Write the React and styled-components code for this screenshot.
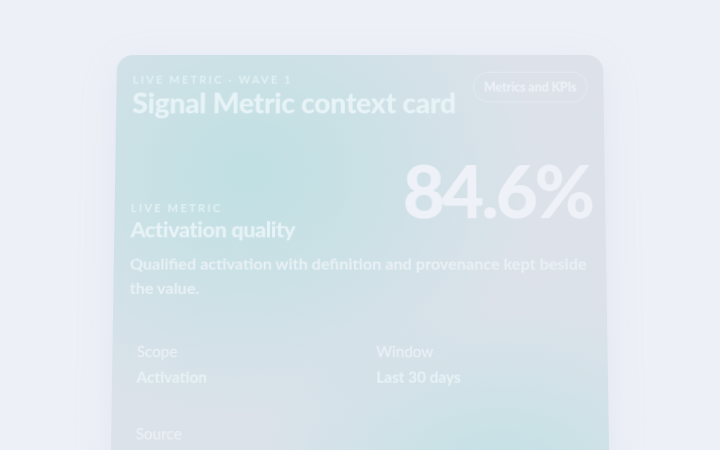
import React from "react";
import styled, { createGlobalStyle } from "styled-components";

const Global = createGlobalStyle`
  html, body { margin: 0; padding: 0; background: #edf0f7; }
  body { font-family: Lato, "Open Sans", sans-serif; overflow: hidden; }
  * { box-sizing: border-box; }
`;

const Page = styled.main`
  min-height: 100vh;
  display: flex;
  justify-content: center;
  padding-top: 55px;
  perspective: 1000px;
`;

const Card = styled.section`
  width: 486px;
  border-radius: 16px;
  padding: 17px 16px 40px;
  transform-origin: 50% 0;
  transform: rotateX(3.6deg);
  background:
    radial-gradient(ellipse 290px 250px at 27% 25%, rgba(192, 224, 227, 1), rgba(192, 224, 227, 0.6) 45%, rgba(192, 224, 227, 0) 100%),
    radial-gradient(ellipse 250px 180px at 78% 90%, rgba(192, 225, 228, 0.95), rgba(192, 225, 228, 0) 100%),
    linear-gradient(180deg, #dde2ea 0%, #dce2ea 100%);
  box-shadow: 0 10px 40px rgba(160, 175, 200, 0.12);
  color: #eef2f8;
`;

const Header = styled.header`
  display: flex;
  justify-content: space-between;
  align-items: flex-start;
  gap: 10px;
`;

const Eyebrow = styled.div`
  font-size: 11px;
  font-weight: 700;
  letter-spacing: 0.2em;
  text-transform: uppercase;
  color: #e0f1f3;
  line-height: 14px;
`;

const HeadText = styled.div`
  padding-top: 1px;
  min-width: 0;
`;

const Title = styled.h1`
  margin: 0;
  font-size: 28.3px;
  font-weight: 900;
  letter-spacing: -0.012em;
  line-height: 32px;
  white-space: nowrap;
  color: #e7f3f6;
`;

const Badge = styled.span`
  flex: none;
  border: 1.5px dotted rgba(240, 244, 250, 0.9);
  border-radius: 999px;
  padding: 7px 10px;
  font-size: 12.5px;
  font-weight: 700;
  letter-spacing: -0.01em;
  color: #eef2f8;
  line-height: 15px;
`;

const MetricRow = styled.div`
  margin-top: 38px;
  display: flex;
  justify-content: space-between;
  align-items: flex-end;
`;

const MetricLabel = styled.div``;

const Subtitle = styled.h2`
  margin: 1px 0 0;
  font-size: 21.5px;
  font-weight: 900;
  letter-spacing: -0.02em;
  line-height: 26px;
  color: #e7f3f6;
`;

const BigValue = styled.div`
  font-size: 72px;
  font-weight: 900;
  letter-spacing: -0.04em;
  line-height: 68px;
  color: #eef1f8;
  margin-right: -3px;
  margin-bottom: 18px;
`;

const Description = styled.p`
  margin: 9px 0 0;
  font-size: 16px;
  line-height: 24px;
  color: #e9f1f5;
  font-weight: 700;
`;

const MetaGrid = styled.dl`
  margin: 29px 0 0;
  display: grid;
  grid-template-columns: 1fr 1fr;
  column-gap: 16px;
`;

const MetaItem = styled.div`
  padding: 10px 8px 0;
  height: 80px;
`;

const MetaLabel = styled.dt`
  font-size: 15px;
  line-height: 22px;
  color: #edf1f7;
`;

const MetaValue = styled.dd`
  margin: 3px 0 0;
  font-size: 15px;
  line-height: 22px;
  font-weight: 700;
  color: #e8f3f6;
`;

const meta = [
  ["Scope", "Activation"],
  ["Window", "Last 30 days"],
  ["Source", "Product analytics"],
];

export default function App() {
  return (
    <>
      <Global />
      <Page>
        <Card>
          <Header>
            <HeadText>
              <Eyebrow>Live metric · Wave 1</Eyebrow>
              <Title>Signal Metric context card</Title>
            </HeadText>
            <Badge>Metrics and KPIs</Badge>
          </Header>
          <MetricRow>
            <MetricLabel>
              <Eyebrow>Live metric</Eyebrow>
              <Subtitle>Activation quality</Subtitle>
            </MetricLabel>
            <BigValue>84.6%</BigValue>
          </MetricRow>
          <Description>
            Qualified activation with definition and provenance kept beside the value.
          </Description>
          <MetaGrid>
            {meta.map(([k, v]) => (
              <MetaItem key={k}>
                <MetaLabel>{k}</MetaLabel>
                <MetaValue>{v}</MetaValue>
              </MetaItem>
            ))}
          </MetaGrid>
        </Card>
      </Page>
    </>
  );
}
